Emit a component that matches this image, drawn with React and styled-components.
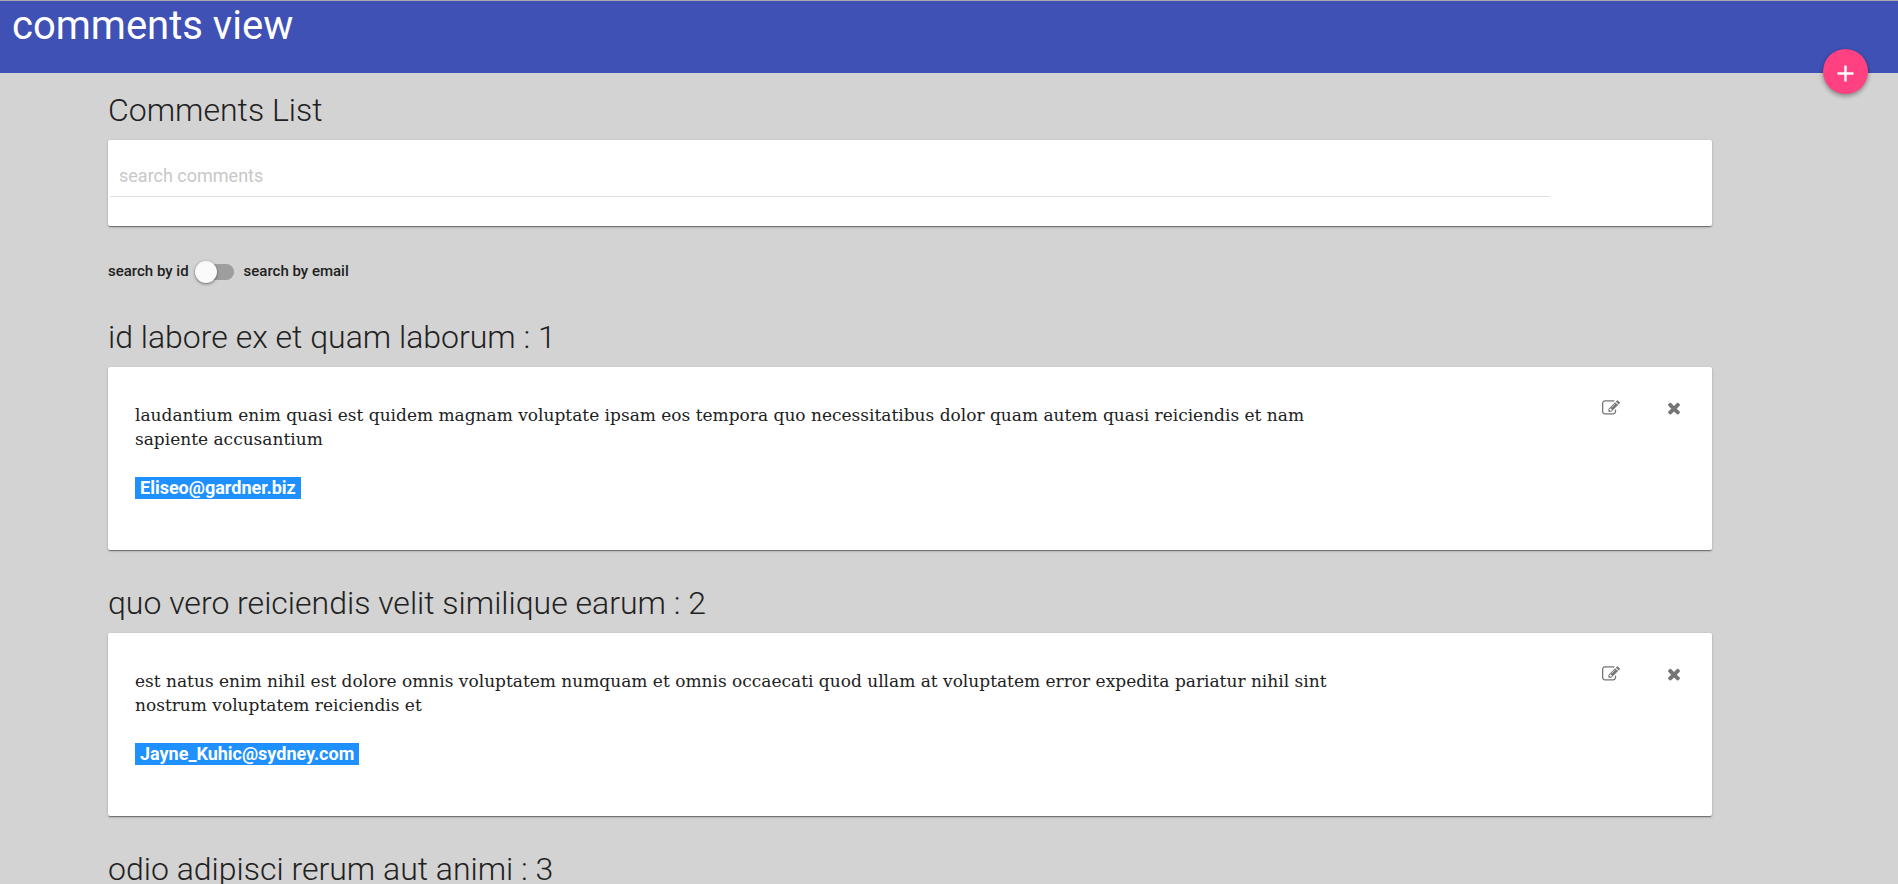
import React, { useState } from "react";
import styled, { createGlobalStyle } from "styled-components";

const GlobalStyle = createGlobalStyle`
  *, *::before, *::after { box-sizing: border-box; }
  html { scrollbar-width: none; }
  body {
    margin: 0;
    background: #d3d3d3;
    color: #212121;
    font-family: Roboto, "Liberation Sans", sans-serif;
  }
`;

const Header = styled.header`
  position: relative;
  height: 73px;
  padding-left: 12px;
  border-top: 1px solid #a9a9b0;
  background: #3f51b5;
  color: #fff;
`;

const PageTitle = styled.h1`
  margin: 0;
  font-size: 40px;
  font-weight: 400;
  line-height: 50px;
`;

const AddButton = styled.button`
  position: absolute;
  right: 30px;
  bottom: -21px;
  width: 45px;
  height: 45px;
  display: flex;
  align-items: center;
  justify-content: center;
  padding: 4px 0 0;
  border: 0;
  border-radius: 50%;
  background: #ff4081;
  color: #fff;
  cursor: pointer;
  box-shadow: 0 2px 5px rgba(0, 0, 0, 0.26), 0 2px 4px rgba(0, 0, 0, 0.16);
`;

const Main = styled.main`
  padding: 17px 186px 33px 108px;
`;

const Heading = styled.h2`
  margin: 0 0 10px;
  font-size: 32px;
  font-weight: 350;
  line-height: 40px;
`;

const Card = styled.div`
  border-radius: 2px;
  background: #fff;
  box-shadow: 0 1px 3px rgba(0, 0, 0, 0.2), 0 1px 1px rgba(0, 0, 0, 0.14),
    0 2px 1px -1px rgba(0, 0, 0, 0.3);
`;

const SearchCard = styled(Card)`
  padding: 16px 2px 29px;
`;

const SearchInput = styled.input`
  display: block;
  width: 90%;
  height: 41px;
  padding: 0 9px 2px;
  border: 0;
  border-bottom: 1px solid #e0e0e0;
  outline: 0;
  background: transparent;
  color: #212121;
  font: 400 18px Roboto, "Liberation Sans", sans-serif;

  &::placeholder { color: #c8c8c8; opacity: 1; }
`;

const SwitchRow = styled.label`
  display: flex;
  width: max-content;
  align-items: center;
  height: 22px;
  margin: 35px 0 34px;
  font-size: 15px;
  font-weight: 500;
  line-height: 20px;
  cursor: pointer;
`;

const SwitchText = styled.span`
  padding-bottom: 2px;
`;

const Switch = styled.input`
  appearance: none;
  display: flex;
  align-items: center;
  width: 36px;
  height: 16px;
  margin: 0 10px 0 9px;
  border-radius: 8px;
  background: #9e9e9e;
  cursor: pointer;

  &::before {
    content: "";
    width: 22px;
    height: 22px;
    margin-left: -3px;
    flex: none;
    border-radius: 50%;
    background: #fafafa;
    box-shadow: 0 1px 3px rgba(0, 0, 0, 0.5);
  }

  &:checked::before { margin-left: 17px; }
`;

const Comment = styled.article`
  & + & { margin-top: 33px; }
`;

const CommentCard = styled(Card)`
  display: flex;
  justify-content: space-between;
  align-items: flex-start;
  min-height: 183px;
  padding: 21px 18px 18px 27px;
`;

const CommentBody = styled.div`
  flex: 0 1 1210px;
  padding-top: 15px;
`;

const Text = styled.p`
  margin: 0 0 26px;
  font-family: "DejaVu Serif", serif;
  font-size: 17px;
  line-height: 24px;
`;

const Email = styled.a`
  display: inline-block;
  padding: 0 5px;
  background: #1e90ff;
  color: #fff;
  font-size: 18px;
  font-weight: 700;
  line-height: 22px;
  text-decoration: none;
`;

const Actions = styled.div`
  display: flex;
  gap: 23px;
`;

const IconButton = styled.button`
  width: 40px;
  height: 40px;
  display: flex;
  align-items: center;
  justify-content: center;
  padding: 0;
  border: 0;
  border-radius: 50%;
  background: transparent;
  color: #757575;
  cursor: pointer;
`;

const Icon = ({ path }) => (
  <svg width="18" height="18" viewBox="0 0 1792 1792" fill="currentColor" aria-hidden="true">
    <path d={path} />
  </svg>
);

const EDIT =
  "M888 1184l116-116-152-152-116 116v56h96v96h56zm440-720q-16-16-33 1l-350 350q-17 17-1 33t33-1l350-350q17-17 1-33zm80 594v190q0 119-84.5 203.5t-203.5 84.5h-832q-119 0-203.5-84.5t-84.5-203.5v-832q0-119 84.5-203.5t203.5-84.5h832q63 0 117 25 15 7 18 23 3 17-9 29l-49 49q-14 14-32 8-23-6-45-6h-832q-66 0-113 47t-47 113v832q0 66 47 113t113 47h832q66 0 113-47t47-113v-126q0-13 9-22l64-64q15-15 35-7t20 29zm-96-738l288 288-672 672h-288v-288zm444 132l-92 92-288-288 92-92q28-28 68-28t68 28l152 152q28 28 28 68t-28 68z";
const TIMES =
  "M1490 1322q0 40-28 68l-136 136q-28 28-68 28t-68-28l-294-294-294 294q-28 28-68 28t-68-28l-136-136q-28-28-28-68t28-68l294-294-294-294q-28-28-28-68t28-68l136-136q28-28 68-28t68 28l294 294 294-294q28-28 68-28t68 28l136 136q28 28 28 68t-28 68l-294 294 294 294q28 28 28 68z";

const comments = [
  {
    id: 1,
    name: "id labore ex et quam laborum",
    email: "Eliseo@gardner.biz",
    body: "laudantium enim quasi est quidem magnam voluptate ipsam eos tempora quo necessitatibus dolor quam autem quasi reiciendis et nam sapiente accusantium",
  },
  {
    id: 2,
    name: "quo vero reiciendis velit similique earum",
    email: "Jayne_Kuhic@sydney.com",
    body: "est natus enim nihil est dolore omnis voluptatem numquam et omnis occaecati quod ullam at voluptatem error expedita pariatur nihil sint nostrum voluptatem reiciendis et",
  },
  { id: 3, name: "odio adipisci rerum aut animi" },
];

export default function App() {
  const [query, setQuery] = useState("");
  const [byEmail, setByEmail] = useState(false);

  return (
    <>
      <GlobalStyle />
      <Header>
        <PageTitle>comments view</PageTitle>
        <AddButton type="button" aria-label="add comment">
          <svg width="17" height="17" viewBox="0 0 17 17" fill="none" stroke="currentColor" strokeWidth="2.4" aria-hidden="true">
            <path d="M8.5 .5v16M.5 8.5h16" />
          </svg>
        </AddButton>
      </Header>
      <Main>
        <Heading>Comments List</Heading>
        <SearchCard>
          <SearchInput
            type="text"
            placeholder="search comments"
            aria-label="search comments"
            value={query}
            onChange={(e) => setQuery(e.target.value)}
          />
        </SearchCard>
        <SwitchRow>
          <SwitchText>search by id</SwitchText>
          <Switch
            type="checkbox"
            role="switch"
            checked={byEmail}
            onChange={(e) => setByEmail(e.target.checked)}
          />
          <SwitchText>search by email</SwitchText>
        </SwitchRow>
        {comments.map((c) => (
          <Comment key={c.id}>
            <Heading>{c.name} : {c.id}</Heading>
            {c.body && (
              <CommentCard>
                <CommentBody>
                  <Text>{c.body}</Text>
                  <Email href={`mailto:${c.email}`}>{c.email}</Email>
                </CommentBody>
                <Actions>
                  <IconButton type="button" aria-label="edit comment"><Icon path={EDIT} /></IconButton>
                  <IconButton type="button" aria-label="delete comment"><Icon path={TIMES} /></IconButton>
                </Actions>
              </CommentCard>
            )}
          </Comment>
        ))}
      </Main>
    </>
  );
}
